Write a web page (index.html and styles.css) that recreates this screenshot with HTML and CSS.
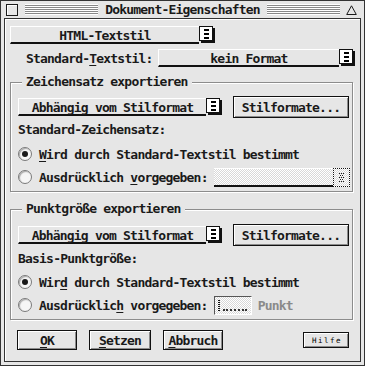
FILE: index.html
```html
<!DOCTYPE html>
<html lang="de">
<head>
    <meta charset="UTF-8">
    <meta name="viewport" content="width=device-width, initial-scale=1.0">
    <title>Dokument-Eigenschaften</title>
    <link rel="stylesheet" href="styles.css">
</head>
<body>

<div class="window">
    <div class="titlebar">
        <span class="closer"></span>
        <span class="stripes"></span>
        <span class="title">Dokument-Eigenschaften</span>
        <span class="stripes"></span>
        <svg class="fuller" width="11" height="10" viewBox="0 0 11 10">
            <path d="M5.5 0.8 L10.3 9.5 L0.7 9.5 Z" fill="none" stroke="#1a1a1a" stroke-width="1"/>
        </svg>
    </div>

    <div class="frame">
        <div class="row row-style">
            <div class="popup popup-style">
                <span class="popup-field">HTML-Textstil</span>
                <span class="popup-icon"><svg width="5" height="10" viewBox="0 0 5 10"><path d="M0 0h5v2H0zM0 4h5v2H0zM0 8h5v2H0z"/></svg></span>
            </div>
        </div>

        <div class="row row-default">
            <span class="label">Standard-<u>T</u>extstil:</span>
            <div class="popup popup-format">
                <span class="popup-field">kein Format</span>
                <span class="popup-icon"><svg width="5" height="10" viewBox="0 0 5 10"><path d="M0 0h5v2H0zM0 4h5v2H0zM0 8h5v2H0z"/></svg></span>
            </div>
        </div>

        <fieldset class="group">
            <legend>Zeichensatz exportieren</legend>
            <div class="group-row">
                <div class="popup popup-source">
                    <span class="popup-field">Abhängig vom Stilformat</span>
                    <span class="popup-icon"><svg width="5" height="10" viewBox="0 0 5 10"><path d="M0 0h5v2H0zM0 4h5v2H0zM0 8h5v2H0z"/></svg></span>
                </div>
                <span class="button button-formats">Stilformate...</span>
            </div>
            <div class="group-label">Standard-Zeichensatz:</div>
            <div class="radio-row first">
                <span class="radio on"></span>
                <span><u>W</u>ird durch Standard-Textstil bestimmt</span>
            </div>
            <div class="radio-row">
                <span class="radio"></span>
                <span>Ausdrücklich <u>v</u>orgegeben:</span>
                <span class="field-wide">
                    <span class="field-main"></span>
                    <span class="field-end">
                        <svg width="7" height="9" viewBox="0 0 7 9" fill="#1a1a1a">
                            <rect x="1" y="0" width="1" height="1"/><rect x="3" y="0" width="1" height="1"/><rect x="5" y="0" width="1" height="1"/>
                            <rect x="2" y="2" width="1" height="1"/><rect x="4" y="2" width="1" height="1"/>
                            <rect x="1" y="4" width="1" height="1"/><rect x="3" y="4" width="1" height="1"/><rect x="5" y="4" width="1" height="1"/>
                            <rect x="2" y="6" width="1" height="1"/><rect x="4" y="6" width="1" height="1"/>
                            <rect x="1" y="8" width="1" height="1"/><rect x="3" y="8" width="1" height="1"/><rect x="5" y="8" width="1" height="1"/>
                        </svg>
                    </span>
                </span>
            </div>
        </fieldset>

        <fieldset class="group group-size">
            <legend>Punktgröße exportieren</legend>
            <div class="group-row">
                <div class="popup popup-source">
                    <span class="popup-field">Abhängig vom Stilformat</span>
                    <span class="popup-icon"><svg width="5" height="10" viewBox="0 0 5 10"><path d="M0 0h5v2H0zM0 4h5v2H0zM0 8h5v2H0z"/></svg></span>
                </div>
                <span class="button button-formats">Stilformate...</span>
            </div>
            <div class="group-label">Basis-Punktgröße:</div>
            <div class="radio-row first">
                <span class="radio on"></span>
                <span>Wir<u>d</u> durch Standard-Textstil bestimmt</span>
            </div>
            <div class="radio-row">
                <span class="radio"></span>
                <span>Ausdrücklic<u>h</u> vorgegeben:</span>
                <span class="field-small">
                    <span class="cursor"></span>
                    <span class="squiggle"></span>
                </span>
                <span class="unit">Punkt</span>
            </div>
        </fieldset>

        <div class="actions">
            <span class="button button-ok"><u>O</u>K</span>
            <span class="button button-set"><u>S</u>etzen</span>
            <span class="button button-cancel"><u>A</u>bbruch</span>
            <span class="button button-help">Hilfe</span>
        </div>
    </div>
</div>

</body>
</html>
```

FILE: styles.css
```css
* {
    box-sizing: border-box;
}
body {
    margin: 0;
    padding: 0;
    background: #e6e6e6;
    font-family: 'DejaVu Sans Mono', 'Liberation Mono', monospace;
    font-weight: bold;
    font-size: 13px;
    letter-spacing: -0.8px;
    color: #1a1a1a;
}
u {
    text-decoration: underline;
    text-decoration-thickness: 1px;
    text-underline-offset: 2px;
}
.window {
    width: 365px;
    height: 366px;
    border: 1px solid #333;
    background: #e6e6e6;
    display: flex;
    flex-direction: column;
}

/* title bar */
.titlebar {
    height: 17px;
    display: flex;
    align-items: center;
    padding: 0 7px 0 5px;
}
.closer {
    width: 12px;
    height: 12px;
    border: 1px solid #1a1a1a;
    background: #e6e6e6;
    box-shadow: inset 1px 1px 0 #fff;
    margin-right: 7px;
}
.stripes {
    flex: 1;
    height: 11px;
    background: repeating-linear-gradient(to bottom, #fff 0 1px, #888 1px 2px);
}
.title {
    padding: 0 7px;
    line-height: 15px;
}
.fuller {
    margin-left: 6px;
}

/* dialog frame */
.frame {
    flex: 1;
    margin: 0 3px 3px 3px;
    border: 1px solid #333;
    box-shadow: inset 1px 1px 0 #fff;
    display: flex;
    flex-direction: column;
}
.row {
    display: flex;
    align-items: center;
}
.row-style {
    margin-top: 7px;
    padding-left: 5px;
}
.row-default {
    margin-top: 4px;
    height: 20px;
    padding-left: 21px;
}
.label {
    width: 132px;
}

/* popup */
.popup {
    display: flex;
    align-items: flex-start;
}
.popup-field {
    height: 18px;
    border-top: 1px solid #fff;
    border-left: 1px solid #fff;
    border-bottom: 2px solid #111;
    display: flex;
    align-items: center;
    justify-content: center;
    padding-top: 1px;
}
.popup-icon {
    width: 14px;
    height: 15px;
    border: 1px solid #111;
    background: #fff;
    box-shadow: 2px 2px 0 #111;
    display: flex;
    align-items: center;
    justify-content: center;
}
.popup-style .popup-field {
    width: 189px;
}
.popup-format .popup-field {
    width: 181px;
}
.popup-source .popup-field {
    width: 188px;
}

/* buttons */
.button {
    display: flex;
    align-items: center;
    justify-content: center;
    border: 1px solid #111;
    background: #e6e6e6;
    box-shadow: inset 1px 1px 0 #fff, inset -1px -1px 0 #8c8c8c;
}
.button-formats {
    width: 116px;
    height: 22px;
    margin-left: 13px;
}

/* groups */
.group {
    width: 343px;
    margin: 7px 0 0 5px;
    padding: 0 0 4px 7px;
    min-width: 0;
    border: 1px solid #8c8c8c;
    box-shadow: inset 1px 1px 0 #fff, 1px 1px 0 #fff;
}
.group legend {
    margin-left: 4px;
    padding: 0 4px;
    line-height: 14px;
    background: #e6e6e6;
}
.group-row {
    display: flex;
    align-items: center;
    height: 22px;
    margin-top: 7px;
}
.group-label {
    height: 16px;
    line-height: 16px;
    margin-top: 4px;
}
.radio-row {
    display: flex;
    align-items: center;
    height: 20px;
    margin-top: 3px;
}
.radio-row.first {
    margin-top: 6px;
}
.group-size {
    margin-top: 10px;
}
.group-size .group-row {
    margin-top: 8px;
}
.group-size .group-label {
    margin-top: 5px;
}
.group-size .radio-row.first {
    margin-top: 5px;
}
.radio {
    width: 14px;
    height: 14px;
    border-radius: 50%;
    border: 1px solid #7a7a7a;
    background: #f6f6f6;
    box-shadow: inset 1px 1px 1px #aaa;
    margin-right: 7px;
    display: flex;
    align-items: center;
    justify-content: center;
}
.radio.on::after {
    content: "";
    width: 6px;
    height: 6px;
    border-radius: 50%;
    background: #1a1a1a;
}

/* text fields */
.field-wide {
    display: flex;
    width: 136px;
    height: 19px;
    margin-left: 6px;
}
.field-main {
    flex: 1;
    border-top: 1px solid #fff;
    border-bottom: 2px solid #111;
    background: repeating-conic-gradient(#fff 0 25%, #d8d8d8 0 50%) 0 0 / 2px 2px;
}
.field-end {
    width: 17px;
    border: 1px dotted #111;
    background: repeating-conic-gradient(#fff 0 25%, #d8d8d8 0 50%) 0 0 / 2px 2px;
    display: flex;
    align-items: center;
    justify-content: center;
}
.field-small {
    display: flex;
    align-items: flex-end;
    width: 38px;
    height: 19px;
    margin-left: 6px;
    padding: 3px 4px 3px 3px;
    border: 1px solid;
    border-color: #555 #fff #fff #555;
    background: repeating-conic-gradient(#fff 0 25%, #d8d8d8 0 50%) 0 0 / 2px 2px;
}
.cursor {
    width: 2px;
    height: 11px;
    border-left: 1px dotted #111;
    border-right: 1px dotted #111;
}
.squiggle {
    flex: 1;
    height: 2px;
    margin-left: 3px;
    border-bottom: 2px dotted #333;
}
.unit {
    margin-left: 6px;
    color: #8a8a8a;
}

/* bottom buttons */
.actions {
    display: flex;
    align-items: center;
    height: 20px;
    margin-top: 10px;
    padding: 0 11px 0 12px;
}
.button-ok {
    width: 60px;
    height: 20px;
}
.button-set {
    width: 62px;
    height: 20px;
    margin-left: 12px;
}
.button-cancel {
    width: 60px;
    height: 20px;
    margin-left: 12px;
}
.button-help {
    width: 46px;
    height: 16px;
    margin-left: auto;
    font-size: 7.5px;
    font-weight: normal;
    letter-spacing: 1.5px;
    padding-left: 2px;
    color: #000;
}
```
